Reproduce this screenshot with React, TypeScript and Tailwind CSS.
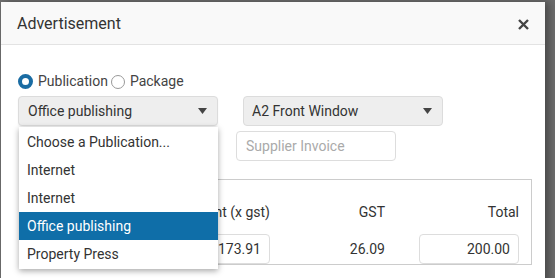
import React from 'react';

const font = { fontFamily: 'Roboto, "Liberation Sans", sans-serif' };

function Caret() {
  return (
    <svg width="9" height="6" viewBox="0 0 9 6" className="text-[#444]">
      <path d="M0 0h9L4.5 6z" fill="currentColor" />
    </svg>
  );
}

function Radio({ checked, label }: { checked?: boolean; label: string }) {
  return (
    <label className="flex items-center gap-[5px]">
      {checked ? (
        <span className="h-[15px] w-[15px] rounded-full border-[4px] border-[#1a6ca3] bg-white" />
      ) : (
        <span className="h-[14px] w-[14px] rounded-full border border-[#999] bg-white" />
      )}
      <span>{label}</span>
    </label>
  );
}

export default function App() {
  const items = ['Choose a Publication...', 'Internet', 'Internet', 'Office publishing', 'Property Press'];

  return (
    <div className="h-[278px] w-[555px] overflow-hidden bg-[#6e6e6e] pt-[2px] pl-[1px] text-[14px] text-[#333]" style={font}>
      <div className="h-[300px] w-[544px] bg-white shadow-[4px_0_8px_rgba(0,0,0,0.35)]">
        <div className="flex h-[43px] items-center justify-between border-b border-[#e3e3e3] bg-[#f9f9f9] pl-[16px] pr-[16px] pt-[2px]">
          <h2 className="text-[16px] text-[#333]">Advertisement</h2>
          <svg width="11" height="11" viewBox="0 0 11 11" className="text-[#444]">
            <path d="M1 1l9 9M10 1l-9 9" stroke="currentColor" strokeWidth="2.4" />
          </svg>
        </div>

        <div className="relative px-[17px] pt-[28px]">
          <div className="flex h-[17px] items-center gap-[3px] text-[#444]">
            <Radio checked label="Publication" />
            <Radio label="Package" />
          </div>

          <div className="mt-[6px] flex gap-[25px]">
            <div className="relative w-[200px]">
              <div className="flex h-[30px] items-center justify-between rounded-[4px] border border-[#dcdcdc] bg-[#eeeeee] pl-[9px] pr-[10px] shadow-[0_1px_2px_rgba(0,0,0,0.06)]">
                <span>Office publishing</span>
                <Caret />
              </div>

              <ul className="absolute left-[1px] top-[31px] z-10 w-[199px] bg-white py-px shadow-[0_2px_6px_rgba(0,0,0,0.35)]">
                {items.map((it, i) => (
                  <li
                    key={i}
                    className={
                      i === 3
                        ? 'flex h-[28px] items-center bg-[#0f6ea8] pl-[8px] text-white'
                        : 'flex h-[28px] items-center pl-[8px] text-[#333]'
                    }
                  >
                    {it}
                  </li>
                ))}
              </ul>
            </div>

            <div className="flex w-[200px] flex-col gap-[5px]">
              <div className="flex h-[30px] items-center justify-between rounded-[4px] border border-[#dcdcdc] bg-[#eeeeee] pl-[8px] pr-[10px]">
                <span>A2 Front Window</span>
                <Caret />
              </div>
              <input
                placeholder="Supplier Invoice"
                className="-ml-[7px] h-[30px] w-[160px] rounded-[4px] border border-[#dddddd] bg-white px-[9px] text-[14px] outline-none placeholder:text-[#aaa]"
              />
            </div>
          </div>

          <div className="ml-[3px] mt-[18px] w-[511px] border border-[#cccccc]">
            <div className="grid grid-cols-[248px_115px_134px] pt-[22px] pr-[12px]">
              <div className="text-right">Amount (x gst)</div>
              <div className="text-right">GST</div>
              <div className="text-right">Total</div>
            </div>
            <div className="mt-[11px] grid grid-cols-[248px_115px_134px] items-center pr-[12px]">
              <div className="flex justify-end">
                <div className="flex h-[30px] w-[100px] items-center justify-end rounded-[4px] border border-[#dddddd] pr-[8px]">173.91</div>
              </div>
              <div className="text-right">26.09</div>
              <div className="flex justify-end">
                <div className="flex h-[30px] w-[100px] items-center justify-end rounded-[4px] border border-[#dddddd] pr-[8px]">200.00</div>
              </div>
            </div>
          </div>
        </div>
      </div>
    </div>
  );
}
